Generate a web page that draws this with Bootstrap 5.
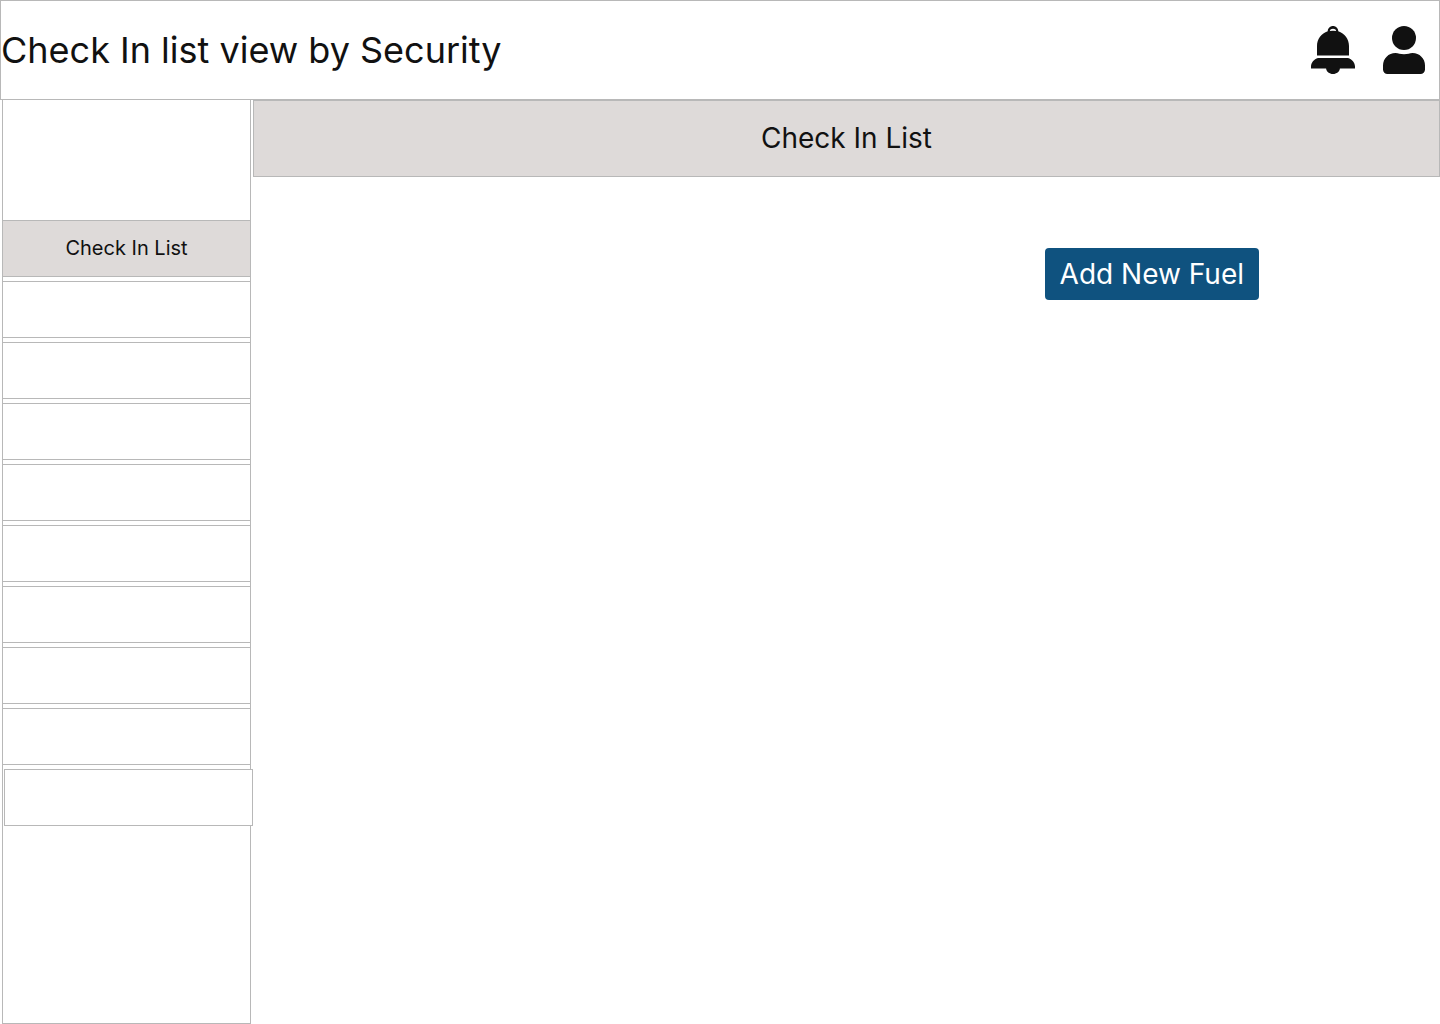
<!DOCTYPE html>
<html lang="en">
<head>
<meta charset="utf-8">
<meta name="viewport" content="width=device-width, initial-scale=1">
<title>Check In list view by Security</title>
<link href="https://cdn.jsdelivr.net/npm/bootstrap@5.3.0/dist/css/bootstrap.min.css" rel="stylesheet">
<style>
  :root { --line: #b8b8b8; --ink: #111111; --panel: #dedad9; }
  body { font-family: Inter, "Liberation Sans", sans-serif; color: var(--ink); background: #fff; }
  .topbar { height: 100px; border: 1px solid var(--line); padding-right: 14px; }
  .topbar h1 { font-size: 36px; line-height: 44px; font-weight: 400; }
  .icon-group { gap: 28px; }
  .icon-button { color: var(--ink); line-height: 0; }
  .side-panel { width: 249px; margin: 0 2px; padding-top: 120px; border: 1px solid var(--line); border-top: 0; }
  .side-menu { gap: 4px; }
  .side-item { height: 57px; padding-bottom: 1px; border: 1px solid var(--line); border-width: 1px 0; background: #fff; font-size: 20px; line-height: 24px; }
  .side-item a { color: var(--ink); }
  .side-item.current { background: var(--panel); }
  .side-item.boxed { width: 249px; margin-left: 1px; border-width: 1px; }
  .banner { height: 77px; padding-bottom: 1px; border: 1px solid var(--line); background: var(--panel); }
  .banner h2 { font-size: 28px; line-height: 34px; font-weight: 400; }
  .actions { padding: 71px 181px 0 0; }
  .btn-fuel { --bs-btn-color: #fff; --bs-btn-bg: #0f527f; --bs-btn-hover-color: #fff; --bs-btn-hover-bg: #0c4368; --bs-btn-border-width: 0;
    --bs-btn-border-radius: 4px; --bs-btn-font-size: 28px; --bs-btn-line-height: 34px; --bs-btn-padding-x: 15px; --bs-btn-padding-y: 9px; }
</style>
</head>
<body class="d-flex flex-column min-vh-100">
<header class="topbar d-flex align-items-center justify-content-between">
  <h1 class="m-0">Check In list view by Security</h1>
  <div class="icon-group d-flex align-items-center">
    <button type="button" class="icon-button border-0 bg-transparent p-0" aria-label="Notifications">
      <svg width="44" height="48" viewBox="0 0 44 48" fill="currentColor" aria-hidden="true">
        <path fill-rule="evenodd" d="M6 29.5V20C6 13 10.500 7.300 16.700 5.200C16.900 2.200 19.200 0 22 0S27.100 2.200 27.300 5.200C33.500 7.300 38 13 38 20V29.500ZM18.800 5Q22 4.400 25.200 5C24.900 3.500 23.600 2.700 22 2.700S19.100 3.500 18.800 5Z"/>
        <path d="M7 32H37C41 33 44 37 44 40.500V42.500H28.900C28.500 45.700 25.600 48 22 48S15.500 45.700 15.100 42.500H0V40.500C0 37 3 33 7 32Z"/>
      </svg>
    </button>
    <button type="button" class="icon-button border-0 bg-transparent p-0" aria-label="Account">
      <svg width="42" height="48" viewBox="0 0 42 48" fill="currentColor" aria-hidden="true">
        <circle cx="21" cy="12" r="12"/>
        <path d="M12.500 27C15.500 27 17 28.300 21 28.300S26.500 27 29.500 27C36.500 27 42 32.500 42 39.500V43.500C42 46 40 48 37.500 48H4.500C2 48 0 46 0 43.500V39.500C0 32.500 5.500 27 12.500 27Z"/>
      </svg>
    </button>
  </div>
</header>
<div class="d-flex flex-grow-1">
  <nav class="side-panel flex-shrink-0" aria-label="Main">
    <ul class="side-menu list-unstyled d-flex flex-column m-0">
      <li class="side-item current d-flex"><a href="#" class="d-flex flex-fill align-items-center justify-content-center text-decoration-none" aria-current="page">Check In List</a></li>
      <li class="side-item"></li>
      <li class="side-item"></li>
      <li class="side-item"></li>
      <li class="side-item"></li>
      <li class="side-item"></li>
      <li class="side-item"></li>
      <li class="side-item"></li>
      <li class="side-item"></li>
      <li class="side-item boxed"></li>
    </ul>
  </nav>
  <main class="flex-grow-1">
    <div class="banner d-flex align-items-center justify-content-center"><h2 class="m-0">Check In List</h2></div>
    <div class="actions d-flex justify-content-end"><button type="button" class="btn btn-fuel">Add New Fuel</button></div>
  </main>
</div>
<script src="https://cdn.jsdelivr.net/npm/bootstrap@5.3.0/dist/js/bootstrap.bundle.min.js"></script>
</body>
</html>
